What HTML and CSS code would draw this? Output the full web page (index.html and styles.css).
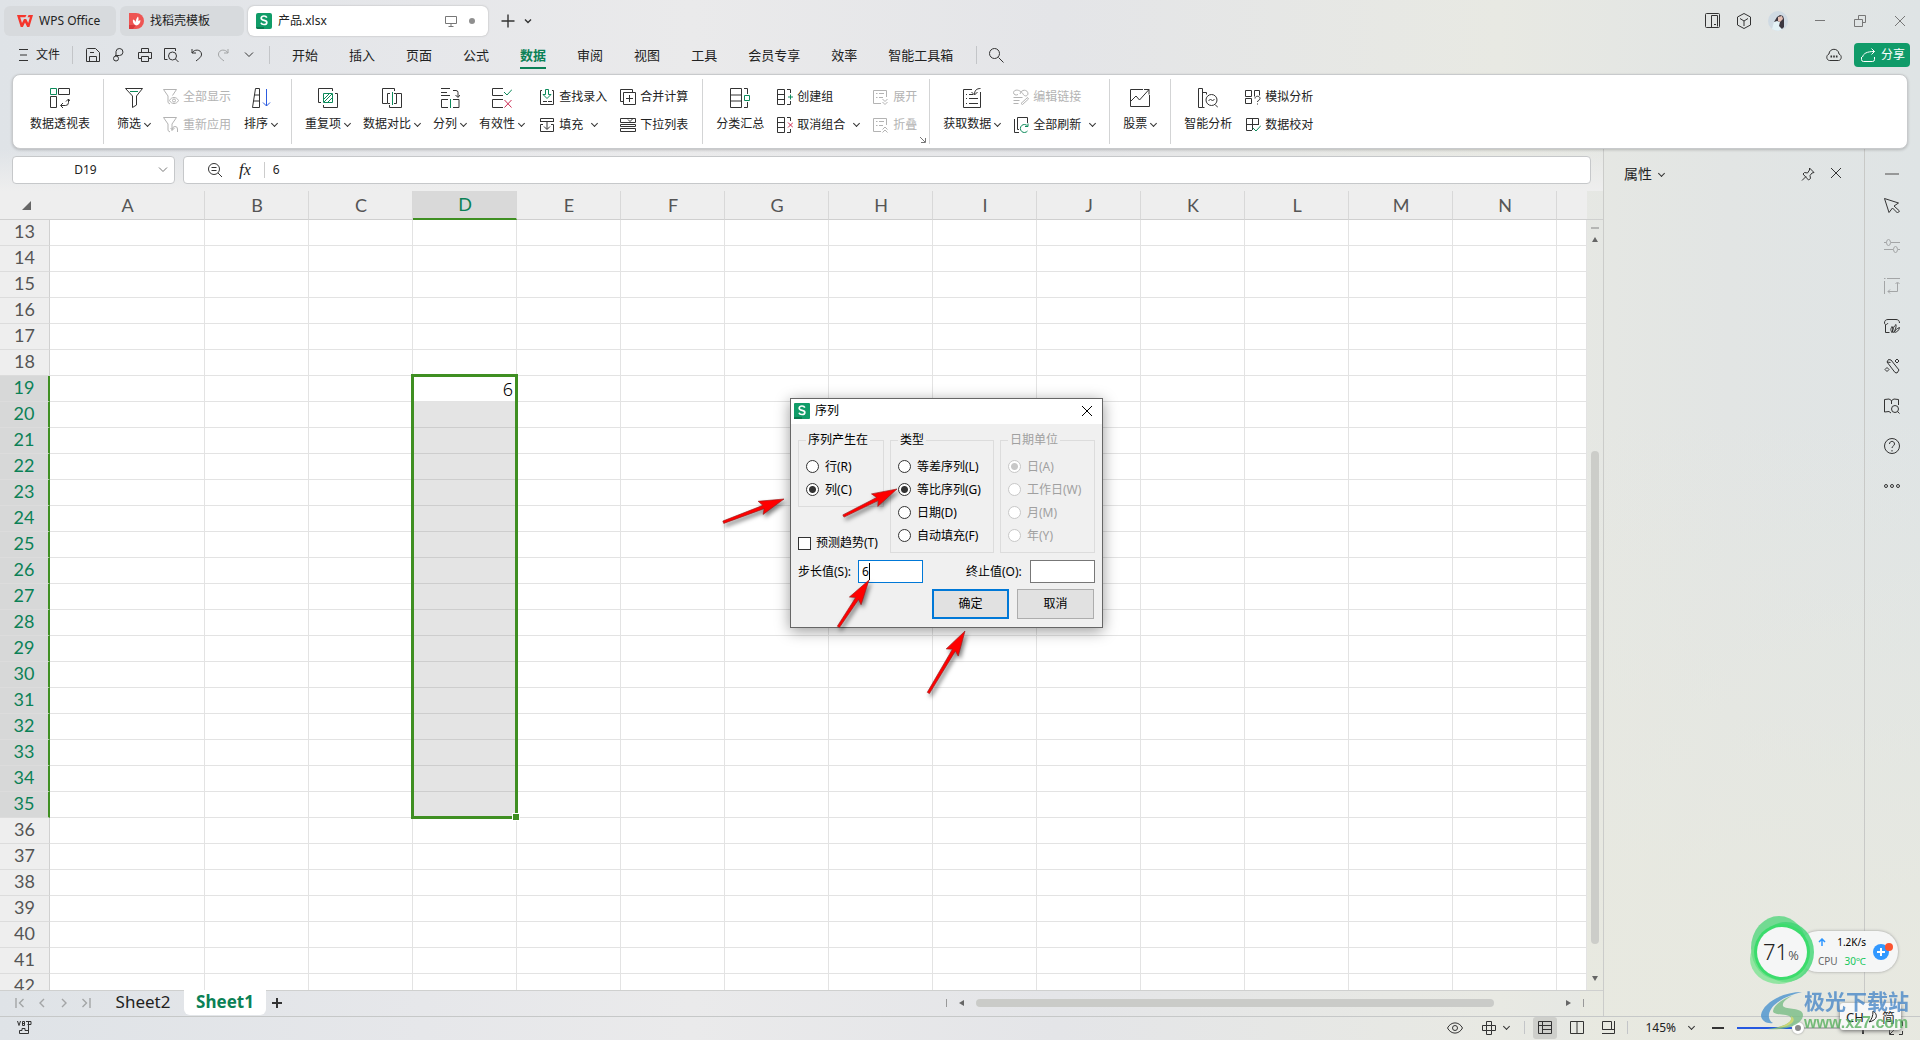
FILE: index.html
```html
<!DOCTYPE html>
<html lang="zh-CN">
<head>
<meta charset="utf-8">
<title>产品.xlsx - WPS Office</title>
<link rel="stylesheet" href="styles.css">
</head>
<body>
<header class="titlebar">
  <button class="doc-tab home">
    <svg width="16" height="14" viewBox="0 0 16 14"><path d="M0 1h9.500l-1.200 2.200H3.200L5 9l2-4h2.200l2 4 1.700-5.800h-2.400L11.600 1H16l-3.600 12h-2.200L8 8.400 5.900 13H3.700z" fill="#f5362d"/></svg>
    <span>WPS Office</span>
  </button>
  <button class="doc-tab docer">
    <svg width="15" height="16" viewBox="0 0 15 16"><path d="M0 0h7a8 8 0 0 1 0 16H0z" fill="#ee5553"/><path d="M0 12h7l-3 4H0z" fill="#d93a3c"/><path d="M7 12.500C4 11 3.500 8.500 4 6.500c1.800.6 2.500 1.700 2.600 3C6.800 7 7.500 5 9 3.500c.8 2 .6 3.200.2 4.600.6-.6 1.400-.9 2.300-.9C11.300 10 10 12 7 12.500z" fill="#fff"/></svg>
    <span>找稻壳模板</span>
  </button>
  <button class="doc-tab active">
    <svg width="16" height="16" viewBox="0 0 16 16"><rect width="16" height="16" rx="2" fill="#109c68"/><path d="M0 14h8v2H2a2 2 0 0 1-2-2z" fill="#0b7a50"/><path d="M10.800 4.700C10.300 3.500 9.300 3 8 3 6.300 3 5.200 3.900 5.200 5.200c0 3 5.600 1.500 5.600 4.200 0 1.300-1.200 2.100-2.800 2.100-1.500 0-2.600-.6-3-1.800" fill="none" stroke="#fff" stroke-width="1.700"/></svg>
    <span class="doc-name">产品.xlsx</span>
    <svg width="12" height="12" viewBox="0 0 12 12" class="ic gray"><path d="M.5 1.500h11v7H.5zM3.500 11.500h5M6 8.500v3"/></svg>
    <i class="unsaved"></i>
  </button>
  <button class="plain" aria-label="新建"><svg width="14" height="14" viewBox="0 0 14 14" class="ic bold"><path d="M7 .5v13M.5 7h13"/></svg></button>
  <button class="plain next" aria-label="标签列表"><svg width="8" height="6" viewBox="0 0 8 6" class="ic bold"><path d="M1 1.500l3 3 3-3"/></svg></button>
  <div class="window-tools">
    <svg width="15" height="15" viewBox="0 0 15 15" class="ic"><rect x=".5" y=".5" width="14" height="14" rx="1"/><path d="M6.500 14V2.500h6v11M9 11.500h2"/></svg>
    <svg width="16" height="16" viewBox="0 0 16 16" class="ic"><path d="M8 .5l6.500 3.500v8L8 15.500 1.500 12V4zM4 5.500l4 2.500 4-2.500M8 8v5"/></svg>
    <svg width="20" height="20" viewBox="0 0 20 20"><circle cx="10" cy="10" r="10" fill="#cfdae3"/><path d="M4 18l2-7 5-3 3 5 1 5a10 10 0 0 1-11 0z" fill="#e3f1f6"/><path d="M6 11l3-5 3-2 3 1 1 3v8l-2 2-3-3 1-4-3-1z" fill="#3b3740"/><path d="M10 6l4-1 1 3-3 3-2-1z" fill="#e4bfb4"/></svg>
    <button class="plain" aria-label="最小化"><svg width="12" height="12" viewBox="0 0 12 12" class="ic gray"><path d="M1 5.500h10"/></svg></button>
    <button class="plain" aria-label="还原"><svg width="12" height="12" viewBox="0 0 12 12" class="ic gray"><path d="M.5 4.500h8v7h-8zM4.500 4.500v-4h7v7h-3"/></svg></button>
    <button class="plain" aria-label="关闭"><svg width="12" height="12" viewBox="0 0 12 12" class="ic gray"><path d="M1 1l10 10M11 1L1 11"/></svg></button>
  </div>
</header>

<nav class="menubar">
  <button class="plain file"><svg width="9" height="12" viewBox="0 0 9 12" class="ic"><path d="M0 .5h9M1 6h7M0 11.500h9"/></svg><span>文件</span></button>
  <i class="sep"></i>
  <div class="quick">
    <svg width="16" height="16" viewBox="0 0 16 16" class="ic"><path d="M1.500 14.500V2.500a1 1 0 0 1 1-1h8l4 4v9zM4.500 14.500v-5h7v5M5 5.500h4"/></svg>
    <svg width="16" height="16" viewBox="0 0 16 16" class="ic"><circle cx="5" cy="11.500" r="2.500"/><path d="M5 8V4.500a3.500 3.500 0 1 1 3.500 4H4"/></svg>
    <svg width="16" height="16" viewBox="0 0 16 16" class="ic"><path d="M4.500 5V1.500h7V5M4 11.500H1.500v-6h13v6H12M4.500 9.500h7v5h-7z"/></svg>
    <svg width="16" height="16" viewBox="0 0 16 16" class="ic"><path d="M4.500 12.500h-3v-11h11V4"/><circle cx="9.500" cy="9" r="4"/><path d="M12.500 12l3 3"/></svg>
    <svg width="16" height="16" viewBox="0 0 16 16" class="ic"><path d="M3 2v4h4M3 6c2-4 9-4 9.500 1C12.700 10 10 11.500 7 14"/></svg>
    <svg width="16" height="16" viewBox="0 0 16 16" class="ic pale"><path d="M13 2v4H9M13 6C11 2 4 2 3.500 7 3.300 10 6 11.500 9 14"/></svg>
    <svg width="10" height="6" viewBox="0 0 10 6" class="ic more"><path d="M1 .5l4 4 4-4"/></svg>
  </div>
  <i class="sep"></i>
  <div class="menu-tabs">
    <button>开始</button><button>插入</button><button>页面</button><button>公式</button><button class="on">数据</button><button>审阅</button><button>视图</button><button>工具</button><button>会员专享</button><button>效率</button><button>智能工具箱</button>
  </div>
  <i class="sep"></i>
  <button class="plain search" aria-label="搜索"><svg width="16" height="16" viewBox="0 0 16 16" class="ic"><circle cx="6.500" cy="6.500" r="5"/><path d="M10.500 10.500l5 5"/></svg></button>
  <div class="share-tools">
    <svg width="16" height="14" viewBox="0 0 16 14" class="ic"><path d="M3.500 12.500C.3 12.300-.3 7.300 3 6c.2-6 9.500-6.500 10 0 3.300 1.200 2.700 6.300-.5 6.500z"/><path d="M4.500 8.500h1.600M7.200 8.500h1.600M9.900 8.500h1.600" stroke-width="2"/></svg>
    <button class="share"><svg width="15" height="14" viewBox="0 0 15 14"><path d="M.5 9v2.500a2 2 0 0 0 2 2h9a2 2 0 0 0 2-2V9M1.500 9c1-3.500 4-5.500 12-5.500M10.500.5l3 3-3 3" fill="none" stroke="#fff"/></svg><span>分享</span></button>
  </div>
</nav>

<section class="ribbon" aria-label="数据">
  <div class="group">
    <button class="big"><svg width="20" height="20" viewBox="0 0 20 20" class="ic"><path class="g" d="M.5.500h6v6h-6z"/><path d="M8.500.5h11v6h-11zM.5 8.500h6v11h-6zM11 17.500h4.500a3 3 0 0 0 3-3V11M13 15l-2.500 2.500L13 20M16 13.500l2.500-2.500 1.500 2"/></svg><span>数据透视表</span></button>
  </div>
  <div class="group">
    <button class="big"><svg width="20" height="20" viewBox="0 0 20 20" class="ic"><path d="M1.500.5h17l-6 7.500v9l-4 2.500V8z"/><path class="g" d="M6 3.500h8"/></svg><span class="drop">筛选</span></button>
    <div class="stack">
      <button disabled><svg width="16" height="16" viewBox="0 0 16 16" class="ic"><path d="M7 15l-2-1.500V7L.5.500h13L9.500 6.500M6.500 11.500c2-4 7-4 9 0-2 4-7 4-9 0z"/><circle cx="11" cy="11.500" r="1.500"/></svg>全部显示</button>
      <button disabled><svg width="16" height="16" viewBox="0 0 16 16" class="ic"><path d="M7 15l-2-1.500V7L.5.500h13L9 7v7M14.500 15v-3a2.500 2.500 0 0 0-5 0M7.500 11l2 2 2-2"/></svg>重新应用</button>
    </div>
    <button class="big"><svg width="20" height="20" viewBox="0 0 20 20" class="ic"><path d="M4.500.5h4v19h-7zM3.500 7h5M2.500 13h6"/><path class="b" d="M15.500 1v17M12 14.500l3.500 3.500 3.500-3.500"/></svg><span class="drop">排序</span></button>
  </div>
  <div class="group">
    <button class="big"><svg width="20" height="20" viewBox="0 0 20 20" class="ic"><path d="M3 14.500H.5V.5h14V3M17 5.500h2.500v14h-14V17"/><path class="g" d="M5.500 5.500h9v9h-9zM6 11l5-5M6 14l8-8M10 14l4-4"/></svg><span class="drop">重复项</span></button>
    <button class="big"><svg width="20" height="20" viewBox="0 0 20 20" class="ic"><path d="M5 15.500H.5V.5h12V3M15 5.500h4.500v14h-12V17M8 5.500H5.500v10H8M12 5.500h2.500v10H12"/><path class="g" d="M10.500 4v13"/></svg><span class="drop">数据对比</span></button>
    <button class="big"><svg width="20" height="20" viewBox="0 0 20 20" class="ic"><path d="M1 .5h9M1 4.500h6M1 7.500h9M13 2.500h3a2 2 0 0 1 2 2V9M15.500 7L18 9.500 20 7M8 19.500H1.500v-8H8M13 11.500h6v8h-6"/><path class="g" d="M10.500 11v9"/></svg><span class="drop">分列</span></button>
    <button class="big"><svg width="20" height="20" viewBox="0 0 20 20" class="ic"><path d="M11 .5H.5v7H11M11 11.500H.5v8H11"/><path class="g" d="M12 4l3 3 5-5.500"/><path class="r" d="M12.500 12l7 7.500M19.500 12l-7 7.500"/></svg><span class="drop">有效性</span></button>
    <div class="stack apart">
      <button><svg width="16" height="16" viewBox="0 0 16 16" class="ic"><path d="M3 1.500H1.500v14h13v-14H13M4 12.500h4M9 12.500h4"/><path class="g" d="M6.500.5h3v5h2.500L8 9.500 4 5.500h2.500z"/></svg>查找录入</button>
      <button class="drop"><svg width="16" height="16" viewBox="0 0 16 16" class="ic"><path d="M1.500 5V1.500h13V5M1 4.500h14M4 7.500H1.500v7h13v-7H12M8 5v7M5 9.500l3 3 3-3"/></svg>填充</button>
    </div>
    <div class="stack">
      <button><svg width="16" height="16" viewBox="0 0 16 16" class="ic"><path d="M3 12.500H.5V.5h12V3M3.500 3.500h12v12h-12zM9.500 6v7M6 9.500h7"/></svg>合并计算</button>
      <button><svg width="16" height="16" viewBox="0 0 16 16" class="ic"><path d="M.5 1.500h15v4H.5zM.5 7.500h15v2H.5zM.5 11.500h15v3H.5zM8 2.500l2 2 3-3"/></svg>下拉列表</button>
    </div>
  </div>
  <div class="group">
    <button class="big"><svg width="20" height="20" viewBox="0 0 20 20" class="ic"><path d="M.5.500h11v19H.500zM.5 7h11M.5 13h11M14 .5h3.500V6M17.500 14v5.500H14"/><path class="g" d="M14.500 7.500h5v5h-5z"/></svg><span>分类汇总</span></button>
    <div class="stack">
      <button><svg width="16" height="16" viewBox="0 0 16 16" class="ic"><path d="M.5.500h7v15H.500zM.5 5.500h7M.5 10.500h7M10 .5h3.500V4M13.500 12v3.500H10"/><path class="g" d="M13.500 5.500v5M11 8h5"/></svg>创建组</button>
      <button class="drop"><svg width="16" height="16" viewBox="0 0 16 16" class="ic"><path d="M.5.500h7v15H.500zM.5 5.500h7M.5 10.500h7M10 .5h3.500V4M13.500 12v3.500H10"/><path class="r" d="M11 5.500l5 5M16 5.500l-5 5"/></svg>取消组合</button>
    </div>
    <div class="stack">
      <button disabled><svg width="16" height="16" viewBox="0 0 16 16" class="ic"><path d="M8 14.500H.5V1.500h13V8M3 4.500h1.500M6 4.500h5M3 8.500h1.500M6 8.500h4M9.500 10l2.500 2.500 2.500-2.500M9.500 13l2.500 2.500 2.500-2.500"/></svg>展开</button>
      <button disabled><svg width="16" height="16" viewBox="0 0 16 16" class="ic"><path d="M8 14.500H.5V1.500h13V8M3 4.500h1.500M6 4.500h5M3 8.500h1.500M6 8.500h4M9.500 12.500L12 10l2.500 2.500M9.500 15.500L12 13l2.500 2.500"/></svg>折叠</button>
    </div>
    <svg class="ic gray launcher" width="6" height="6" viewBox="0 0 6 6"><path d="M0 0l5 5M5.500 1v4.500H1"/></svg>
  </div>
  <div class="group">
    <button class="big"><svg width="20" height="20" viewBox="0 0 20 20" class="ic"><path d="M10 1.500H1.500v18h17V4M4 6.500h1M7 6.500h4M4 10.500h1M7 10.500h9M4 15.500h1M7 15.500h9M18.500.5c-4 0-6 2-6 6M9.500 4l3 3 3-3"/></svg><span class="drop">获取数据</span></button>
    <div class="stack">
      <button disabled><svg width="16" height="16" viewBox="0 0 16 16" class="ic"><path d="M7 5c1-5 8-5 8 0-1 3-4 2-5 0S5 0 2 1.500s-1 6 3 4M.5 8.500h9M.5 11.500h6M.5 14.500h5M8 14.500l6.500-6 1 1.500-6 5.500z"/></svg>编辑链接</button>
      <button class="drop"><svg width="16" height="16" viewBox="0 0 16 16" class="ic"><path d="M1.500 2v13.500H6M6 12.500H4.500V.5h10V6"/><path class="g" d="M14.500 9a4 4 0 1 0 0 5M15 6.500v3h-3"/></svg>全部刷新</button>
    </div>
  </div>
  <div class="group">
    <button class="big"><svg width="20" height="20" viewBox="0 0 20 20" class="ic"><path d="M13 1.500H.5v17h19V7M1 13l5-5 3.500 4L19 1.500M14 1.500h5v5"/></svg><span class="drop">股票</span></button>
  </div>
  <div class="group last">
    <button class="big"><svg width="20" height="20" viewBox="0 0 20 20" class="ic"><path d="M.5.500h4v19h-4zM4.500 4.500h4v2M6.500 19.500h-2M17 16.500l3 3"/><circle cx="13.500" cy="12" r="5.500"/><path d="M10.500 13l2-2 2 2 2-2"/></svg><span>智能分析</span></button>
    <div class="stack">
      <button><svg width="16" height="16" viewBox="0 0 16 16" class="ic"><path d="M.5 1.500h6v6h-6zM9.500 7.500v-6h5v5M.5 9.500h6v5h-6zM10 9.500c0-3 5-3 5 0 0 2-2.500 1.500-2.500 3.500M12.500 14.500v1"/></svg>模拟分析</button>
      <button><svg width="16" height="16" viewBox="0 0 16 16" class="ic"><path d="M7 13.500H1.500v-12h12V8M1.500 7.500h12M7.500 1.500V13"/><path class="g" d="M8 11l3 3 5-5.500"/></svg>数据校对</button>
    </div>
  </div>
</section>

<div class="workspace">
  <main class="sheet">
    <div class="formula-row">
      <label class="name-box"><input value="D19" aria-label="名称框"><svg width="10" height="6" viewBox="0 0 10 6" class="ic gray"><path d="M1 .5l4 4 4-4"/></svg></label>
      <label class="formula-box">
        <svg width="16" height="16" viewBox="0 0 16 16" class="ic"><circle cx="7" cy="7" r="5.500"/><path d="M11 11l4 4M4.500 5.500h5M4.500 8.500h5"/></svg>
        <span class="fx">f<small>x</small></span>
        <i></i>
        <input value="6" aria-label="编辑栏">
      </label>
    </div>
    <div class="grid-row">
      <div class="grid">
        <table><colgroup id="cols"></colgroup><thead><tr id="head"></tr></thead><tbody id="body"></tbody></table>
        <div class="selection"></div>
      </div>
      <div class="vscroll">
        <i class="split"></i><i class="arrow up"></i><div class="vtrack"><i class="vthumb"></i></div><i class="arrow down"></i>
      </div>
    </div>
    <div class="sheet-bar">
      <div class="sheet-nav">
        <svg width="10" height="10" viewBox="0 0 10 10" class="ic pale bold"><path d="M1 0v10M8.500 1l-4 4 4 4"/></svg>
        <svg width="10" height="10" viewBox="0 0 10 10" class="ic pale bold"><path d="M7 1L3 5l4 4"/></svg>
        <svg width="10" height="10" viewBox="0 0 10 10" class="ic pale bold"><path d="M3 1l4 4-4 4"/></svg>
        <svg width="10" height="10" viewBox="0 0 10 10" class="ic pale bold"><path d="M9 0v10M1.500 1l4 4-4 4"/></svg>
      </div>
      <button class="sheet-tab">Sheet2</button>
      <button class="sheet-tab on">Sheet1</button>
      <button class="plain add" aria-label="新建工作表"><svg width="10" height="10" viewBox="0 0 10 10" class="ic heavy"><path d="M5 0v10M0 5h10"/></svg></button>
      <div class="hscroll"><i class="split"></i><i class="arrow left"></i><div class="htrack"><i class="hthumb"></i></div><i class="arrow right"></i><i class="split"></i></div>
    </div>
  </main>
  <aside class="props">
    <h2 class="drop">属性</h2>
    <svg width="14" height="14" viewBox="0 0 14 14" class="ic"><path d="M8.500 1l4.500 4.500-2 .5-2 2.500.5 3L7.500 13 2 7l1.500-1.500 3 .5L8.500 3zM5 9.500L1 13.500"/></svg>
    <svg width="12" height="12" viewBox="0 0 12 12" class="ic"><path d="M1 1l10 10M11 1L1 11"/></svg>
  </aside>
  <aside class="rail">
    <svg width="16" height="16" viewBox="0 0 16 16" class="ic gray bold"><path d="M1 8h14"/></svg>
    <svg width="16" height="16" viewBox="0 0 16 16" class="ic"><path d="M.5.500l14 4.500L10 8l5.500 5-2 2L8.500 10 5 14.500z"/></svg>
    <svg width="16" height="16" viewBox="0 0 16 16" class="ic pale"><path d="M0 4.500h2.500M7 4.500h9M0 11.500h9M14 11.500h2"/><ellipse cx="4.500" cy="4.500" rx="2" ry="3"/><ellipse cx="11.500" cy="11.500" rx="2" ry="3"/></svg>
    <svg width="16" height="16" viewBox="0 0 16 16" class="ic pale"><path d="M0 .5h1.500M3 .5h13M.5 3v13M4 13.500h9.500V5M6 11.500l-2 2 2 2M11.500 6l2-2 2 2"/></svg>
    <svg width="16" height="16" viewBox="0 0 16 16" class="ic"><path d="M15.500 5C15.500 2.500 14 1.500 12 1.500H4C1.500 1.500.5 3 .5 5s2.500 2 3.500 0M1.500 7v7.500h4"/><path d="M8 14.500c-2-3-1-4 0-6 1.500 2 1 4 0 6 1-4 1.500-6 4-8 .5 3-1 6-2.500 8 2-2.500 3.500-4 6-5-.5 3-2.500 4.500-5 5"/></svg>
    <svg width="16" height="16" viewBox="0 0 16 16" class="ic"><path d="M3 4l1.500-2.500 2.500.5 8 10-2 3-2-.5zM3 4l3.500.5M13 1l2 2-2 2-2-2zM3 9.500l2 2-2 2-2-2z"/></svg>
    <svg width="16" height="16" viewBox="0 0 16 16" class="ic"><path d="M7 15l-2-1.500-4.500.5V1.500L5 1l2.500 1.500V6M7.500 2.500L10 1l4.500.5V7"/><circle cx="11" cy="11" r="3.500"/><path d="M13.500 13.500l2 2"/></svg>
    <svg width="16" height="16" viewBox="0 0 16 16" class="ic"><circle cx="8" cy="8" r="7.500"/><path d="M5.500 6c0-3.500 5-3.500 5 0C10.500 8 8 8 8 10M8 12v1.500"/></svg>
    <svg width="16" height="16" viewBox="0 0 16 16" class="ic"><circle cx="2" cy="8" r="1.500"/><circle cx="8" cy="8" r="1.500"/><circle cx="14" cy="8" r="1.500"/></svg>
  </aside>
</div>

<footer class="status">
  <svg width="15" height="14" viewBox="0 0 15 14" class="ic"><path d="M.5 0L2 4.500 3.500 0M5.500.5v4h2v-4zM5.500 2.500h2M9 .5h5v3h-3.500M11.500 1v11.500H2.500v-3H5V7.500h3v2h3"/></svg>
  <div class="status-tools">
    <svg width="16" height="12" viewBox="0 0 16 12" class="ic"><path d="M.5 6C4-.8 12-.8 15.500 6 12 12.800 4 12.800.5 6z"/><circle cx="8" cy="6" r="2.500"/></svg>
    <span class="drop"><svg width="14" height="14" viewBox="0 0 14 14" class="ic"><path d="M4.500 4.500v-4h5v4h4v5h-4v4h-5v-4h-4v-5zM4.500 4.500h5v5h-5z"/></svg></span>
    <i class="sep"></i>
    <button class="view on" aria-label="普通视图"><svg width="14" height="13" viewBox="0 0 14 13" class="ic"><path d="M.5.500h13v12H.500zM.5 4.500h13M4.500.5v12M4.500 8.500h9"/></svg></button>
    <button class="view" aria-label="分页预览"><svg width="14" height="13" viewBox="0 0 14 13" class="ic"><path d="M.5.500h13v12H.500zM7 .5v12"/></svg></button>
    <button class="view" aria-label="阅读模式"><svg width="14" height="13" viewBox="0 0 14 13" class="ic"><path d="M.5.500h9v8h-9zM12.500 0v12.500H0M9.500 8.500h-9M12.500 8.500h-3"/></svg></button>
    <i class="sep"></i>
    <span class="drop zoom">145%</span>
    <svg width="12" height="12" viewBox="0 0 12 12" class="ic heavy"><path d="M0 6h12"/></svg>
    <input type="range" min="0" max="100" value="52" aria-label="缩放">
    <svg width="12" height="12" viewBox="0 0 12 12" class="ic heavy"><path d="M0 6h12M6 0v12"/></svg>
    <svg width="14" height="14" viewBox="0 0 14 14" class="ic"><path d="M9 .5h4.500V5M5 13.500H.5V9M13 1L8.500 5.500M1 13l4.500-4.500M.5 4V.5H4M10 13.500h3.500V10"/></svg>
  </div>
</footer>

<form class="dialog" role="dialog" aria-label="序列">
  <div class="dialog-title">
    <svg width="16" height="16" viewBox="0 0 16 16"><rect width="16" height="16" rx="1" fill="#109c68"/><path d="M0 14h8v2H0z" fill="#0b7a50"/><path d="M10.800 4.700C10.300 3.500 9.300 3 8 3 6.300 3 5.200 3.900 5.200 5.200c0 3 5.600 1.500 5.600 4.200 0 1.300-1.200 2.100-2.800 2.100-1.500 0-2.600-.6-3-1.800" fill="none" stroke="#fff" stroke-width="1.700"/></svg>
    <span>序列</span>
    <button type="button" class="plain" aria-label="关闭"><svg width="12" height="12" viewBox="0 0 12 12" class="ic dark"><path d="M1 1l10 10M11 1L1 11"/></svg></button>
  </div>
  <div class="dialog-body">
    <div class="sets">
      <div class="left-set">
        <fieldset><legend>序列产生在</legend>
          <label><input type="radio" name="dir">行(R)</label>
          <label><input type="radio" name="dir" checked>列(C)</label>
        </fieldset>
        <label class="trend"><input type="checkbox">预测趋势(T)</label>
      </div>
      <fieldset class="mid"><legend>类型</legend>
        <label><input type="radio" name="kind">等差序列(L)</label>
        <label><input type="radio" name="kind" checked>等比序列(G)</label>
        <label><input type="radio" name="kind">日期(D)</label>
        <label><input type="radio" name="kind">自动填充(F)</label>
      </fieldset>
      <fieldset class="unit" disabled><legend>日期单位</legend>
        <label><input type="radio" name="unit" checked>日(A)</label>
        <label><input type="radio" name="unit">工作日(W)</label>
        <label><input type="radio" name="unit">月(M)</label>
        <label><input type="radio" name="unit">年(Y)</label>
      </fieldset>
    </div>
    <div class="values">
      <label for="step">步长值(S):</label><span class="step-field"><input id="step" value="6"><i class="caret"></i></span>
      <label for="stop" class="stop">终止值(O):</label><input id="stop">
    </div>
    <div class="actions"><button type="button" class="ok">确定</button><button type="button">取消</button></div>
  </div>
</form>

<svg class="arrows" width="280" height="230" viewBox="710 480 280 230">
  <g fill="#f00" stroke="#9b1c1c" stroke-width=".6">
    <path transform="translate(784 499) rotate(-20.700)" d="M0 0L-25-7-22-1.500-65-1v2.500L-22 2-25 7z"/>
    <path transform="translate(897 489) rotate(-26.500)" d="M0 0L-25-7-22-1.500-60-1v2.500L-22 2-25 7z"/>
    <path transform="translate(869 580) rotate(-56.600)" d="M0 0L-25-7-22-1.500-56-1v2.500L-22 2-25 7z"/>
    <path transform="translate(965 631) rotate(-59.200)" d="M0 0L-25-7-22-1.500-72-1v2.500L-22 2-25 7z"/>
  </g>
</svg>

<div class="monitor">
  <svg class="ball" width="66" height="70" viewBox="0 0 66 70"><ellipse cx="30" cy="32" rx="28" ry="32" fill="#55d67e" opacity=".8"/><ellipse cx="37" cy="36" rx="28" ry="30" fill="#3fd673" opacity=".8"/><ellipse cx="30" cy="43" rx="29" ry="25" fill="#6ee287" opacity=".7"/><circle cx="33" cy="36" r="28" fill="#3bdc6c"/><circle cx="33" cy="36" r="25" fill="#f5f6f6"/></svg>
  <span class="load">71<small>%</small></span>
  <div class="pill">
    <div class="rates"><span><svg width="8" height="8" viewBox="0 0 8 8"><path d="M4 8V1M1 4l3-3 3 3" fill="none" stroke="#2e96ff" stroke-width="1.500"/></svg><b>1.2K/s</b></span><span>CPU <em>30℃</em></span></div>
    <svg width="22" height="18" viewBox="0 0 22 18"><circle cx="9" cy="10" r="8" fill="#3198ff"/><path d="M9 6v8M5 10h8" stroke="#fff" stroke-width="2"/><circle cx="17" cy="5" r="4" fill="#fb5430"/></svg>
  </div>
</div>

<div class="ime"><span>CH</span><svg width="10" height="14" viewBox="0 0 10 14"><path d="M5 1c5 3 5 9-4 11 3-3 4-6 4-11z" fill="none" stroke="#222"/></svg><span>简</span></div>
<div class="watermark">
  <svg width="44" height="40" viewBox="0 0 44 40"><path d="M42 1C22 1 3 12 1 24c0 6 6 9 12 8C6 28 8 18 18 11c7-5 15-8 24-10z" fill="#4a93cf"/><path d="M34 4C22 8 14 14 13 20c0 5 16 2 18 7 1 5-9 9-24 11 20 2 36-5 36-14 0-8-17-5-20-9-1-4 4-8 11-11z" fill="#79bd85"/><path d="M13 38c12-3 20-7 18-13 6 3 3 11-18 13z" fill="#c6d35b"/></svg>
  <div><strong>极光下载站</strong><span>www.xz7.com</span></div>
</div>
<script src="grid.js"></script>
</body>
</html>
```
FILE: styles.css
```css
* { box-sizing: border-box; }
html { height: 100%; overflow: hidden; }
body {
  margin: 0; height: 100%; display: flex; flex-direction: column; overflow: hidden; position: relative;
  font: 12px/16px "Noto Sans", "Noto Sans CJK SC", sans-serif; color: #222;
  background:
    linear-gradient(180deg, transparent 0 40%, rgba(232,233,224,.9) 92%) right / 340px 100% no-repeat,
    linear-gradient(90deg, #dfe3e7 0, #e6e7ea 22%, #eaeaeb 36%, #e4e5e8 55%, #e8e9e3 78%, #e2e5e4 90%, #dfe4e5 100%);
}
button, input { font: inherit; color: inherit; margin: 0; padding: 0; }
button { border: 0; background: none; white-space: nowrap; }
svg { display: block; flex: none; }
i { display: block; flex: none; font-style: normal; }
.ic { fill: none; stroke: #333; stroke-width: 1; }
.ic.gray { stroke: #777; }
.ic.pale { stroke: #a3a5a6; }
.ic.dark { stroke: #000; }
.ic.bold { stroke-width: 1.400; }
.ic.heavy { stroke-width: 2; }
.ic .g { stroke: #0c8a5a; }
.ic .b { stroke: #2c5ce0; }
.ic .r { stroke: #cc2b53; }
.plain { display: flex; align-items: center; }
.drop::after {
  content: ""; width: 4px; height: 4px; margin: 0 1px 3px 5px; flex: none; display: inline-block;
  border: solid #333; border-width: 0 1px 1px 0; transform: rotate(45deg); vertical-align: middle;
}

/* window title and document tabs */
.titlebar { display: flex; align-items: center; height: 40px; padding: 1px 14px 0 4px; flex: none; }
.doc-tab { display: flex; align-items: center; gap: 6px; height: 30px; border-radius: 6px; background: #d7dadd; }
.home { width: 112px; padding-left: 13px; margin-right: 4px; }
.docer { width: 124px; padding-left: 9px; margin-right: 4px; }
.doc-tab.active { width: 240px; padding: 0 13px 0 8px; background: #fff; box-shadow: 0 0 2px #aaa; margin-right: 13px; }
.doc-name { flex: 1; text-align: left; }
.unsaved { width: 6px; height: 6px; border-radius: 50%; background: #8f8f8f; margin-left: 6px; }
.next { margin-left: 9px; }
.window-tools { margin-left: auto; display: flex; align-items: center; gap: 16px; }
.window-tools .plain { margin-left: 10px; }
.window-tools .plain + .plain { margin-left: 12px; }

.menubar { display: flex; align-items: center; height: 34px; padding: 0 10px 4px 19px; flex: none; }
.file { gap: 8px; margin-right: 12px; }
.sep { width: 1px; height: 18px; background: #c3c5c8; }
.quick { display: flex; align-items: center; gap: 10px; padding: 0 15px 0 12px; }
.quick .more { margin-left: 3px; }
.menu-tabs { display: flex; gap: 31px; padding: 0 23px 0 22px; font-size: 13px; line-height: 20px; }
.menu-tabs button { padding-top: 2px; height: 27px; border-bottom: 2px solid transparent; }
.menu-tabs .on { color: #0b8156; font-weight: 700; border-color: #0b8156; }
.search { margin-left: 11px; }
.share-tools { margin-left: auto; display: flex; align-items: center; gap: 12px; }
.share { display: flex; align-items: center; gap: 5px; width: 56px; height: 24px; padding-left: 7px; border-radius: 4px; background: #109b69; color: #fff; }

.ribbon { display: flex; height: 75px; margin: 0 12px; flex: none; border: 1px solid #c8cacc; border-radius: 8px; background: #fff; box-shadow: 0 1px 3px rgba(0,0,0,.2); position: relative; z-index: 1; }
.group { display: flex; gap: 13px; padding: 0 14px 0 13px; margin: 4px 0; border-right: 1px solid #d3d4d5; position: relative; align-items: flex-start; }
.group:first-child { padding-left: 17px; padding-right: 13px; }
.group:nth-child(4) { padding-right: 12px; }
.group:nth-child(5) { padding-right: 13px; }
.group.last { border: 0; }
.big { display: flex; flex-direction: column; align-items: center; gap: 8px; padding-top: 9px; }
.big .drop { margin-right: -1px; }
.big .drop::after { margin-left: 4px; }
.stack { display: flex; flex-direction: column; gap: 12px; padding-top: 10px; }
.stack.apart { margin-left: 2px; }
.stack button { display: flex; align-items: center; gap: 4px; height: 16px; }
.stack button:disabled { color: #b3b3b3; }
.stack button:disabled .ic { stroke: #b3b3b3; }
.launcher { position: absolute; right: 3px; bottom: 1px; }

.workspace { flex: 1; display: flex; min-height: 0; }
.sheet { flex: 1; display: flex; flex-direction: column; min-width: 0; }
.formula-row { display: flex; gap: 8px; height: 42px; padding: 7px 12px 7px 12px; flex: none; background: linear-gradient(180deg, transparent, #eee); }
.name-box, .formula-box { display: flex; align-items: center; border: 1px solid #c6c8ca; border-radius: 4px; background: #fff; }
.name-box { width: 163px; padding-right: 6px; }
.name-box input, .formula-box input { border: 0; background: none; min-width: 0; flex: 1; outline: 0; }
.name-box input { text-align: center; padding-right: 12px; width: 100px; padding-left: 12px; }
.formula-box { flex: 1; padding-left: 23px; }
.fx { font: italic 17px/20px "Liberation Serif", serif; margin: 0 13px 0 16px; }
.fx small { font-size: 16px; }
.formula-box i { width: 1px; height: 16px; background: #ccc; margin-right: 8px; }

/* cells */
.grid-row { flex: 1; display: flex; min-height: 0; border-bottom: 1px solid #cfd0cf; }
.grid { flex: 1; overflow: hidden; position: relative; background: #fff; min-width: 0; }
table { width: 100%; table-layout: fixed; border-spacing: 0; border-collapse: separate; }
th { padding: 0; background: #eee; color: #555; font: 400 18px/23px Lato, sans-serif; text-align: center; }
thead th { height: 29px; border-right: 1px solid #d8d8d8; border-bottom: 1px solid #cfcfcf; padding-left: 1px; }
thead th:first-child { border-right: 0; }
thead th:last-child { border-right: 0; }
thead th.on { background: #d9d9d9; color: #0b8156; border-bottom: 2px solid #3f8f22; }
.corner { display: block; width: 0; height: 0; margin-left: 21px; border-left: 9px solid transparent; border-bottom: 9px solid #666; }
tbody th { height: 26px; border-right: 1px solid #d0d0d0; border-bottom: 1px solid #dcdcdc; padding-bottom: 2px; }
tbody th.on { background: #d7d8d8; color: #0b8156; border-right: 2px solid #3f8f22; }
td { padding: 2px 3px 0 0; border-right: 1px solid #e3e3e3; border-bottom: 1px solid #e3e3e3; height: 26px; font-size: 18px; line-height: 23px; font-weight: 300; text-align: right; color: #000; }
td.fill { background: #e4e4e4; border-color: #cdcdcd; }
.selection { position: absolute; left: 411px; top: 183px; width: 107px; height: 445px; border: 3px solid #3f8f22; }
.selection::after { content: ""; position: absolute; right: -5px; bottom: -5px; width: 6px; height: 6px; background: #3f8f22; border: 1px solid #fff; }
.vscroll { width: 16px; flex: none; display: flex; flex-direction: column; align-items: center; margin-top: 28px; padding: 7px 0 9px; border-top: 1px solid #cfd0cf; gap: 8px; }
.vscroll .split { width: 8px; height: 2px; background: #b5b6b4; }
.vtrack { flex: 1; display: flex; flex-direction: column; width: 8px; }
.vthumb { width: 8px; height: 493px; margin-top: auto; margin-bottom: 24px; border-radius: 4px; background: #cccdc9; }
.arrow { width: 0; height: 0; border: 3px solid transparent; }
.up { border-bottom: 5px solid #666; border-top: 0; }
.down { border-top: 5px solid #666; border-bottom: 0; }
.left { border-right: 5px solid #666; border-left: 0; }
.right { border-left: 5px solid #666; border-right: 0; }

.sheet-bar { display: flex; align-items: center; height: 25px; flex: none; padding: 0 0 2px 15px; }
.sheet-nav { display: flex; gap: 12px; width: 89px; }
.sheet-tab { width: 78px; height: 24px; font-size: 17px; line-height: 20px; padding-bottom: 2px; align-self: flex-start; }
.sheet-tab.on { width: 82px; margin-top: -1px; height: 25px; background: #fff; color: #0b8156; font-weight: 700; border-radius: 0 0 6px 6px; margin-left: 2px; }
.add { margin-left: 6px; }
.hscroll { display: flex; align-items: center; width: 638px; margin-left: auto; margin-right: 19px; gap: 12px; }
.hscroll .split { width: 1px; height: 8px; background: #999; }
.htrack { flex: 1; }
.hthumb { width: 518px; height: 8px; border-radius: 4px; background: #cacbc8; }

.props { width: 262px; flex: none; border-left: 1px solid #cbccca; border-right: 1px solid #c8c9c7; display: flex; align-items: flex-start; padding: 18px 22px 0 20px; gap: 15px; }
.props h2 { margin: -2px auto 0 0; font-size: 14px; line-height: 18px; font-weight: 400; }
.props h2::after { margin-left: 7px; }
.rail { width: 55px; flex: none; display: flex; flex-direction: column; align-items: center; gap: 24px; padding: 17px 2px 0 0; }
.rail svg:first-child { margin-bottom: -8px; }

.status { height: 24px; flex: none; border-top: 1px solid #c6c8c8; display: flex; align-items: center; padding: 0 17px 2px; }
.status-tools { margin-left: auto; display: flex; align-items: center; }
.status-tools > svg:first-child { margin-right: 19px; }
.status-tools .drop { display: flex; align-items: center; }
.status-tools .drop::after { margin-left: 8px; }
.status-tools .sep { height: 13px; margin: 0 8px 0 14px; }
.view { width: 24px; height: 22px; display: flex; align-items: center; justify-content: center; border-radius: 3px; }
.view.on { background: #cecfcb; }
.view + .view { margin-left: 8px; }
.status-tools .view + .sep { margin-left: 6px; margin-right: 17px; }
.status-tools .zoom { margin-right: 17px; }
.status-tools .zoom::after { margin-left: 13px; }
input[type=range] { appearance: none; width: 118px; height: 12px; margin: 0 2px 0 13px; background: linear-gradient(90deg, #2558e0 50%, #b4b6b3 50%) center / 100% 2px no-repeat; }
input[type=range] + svg { margin-right: 20px; }
input[type=range]::-webkit-slider-thumb { appearance: none; width: 12px; height: 12px; border-radius: 50%; border: 3px solid #fff; background: #888; box-shadow: 0 0 2px #888; }

/* series dialog */
.dialog { position: absolute; z-index: 3; left: 790px; top: 398px; width: 313px; border: 1px solid #666; background: #f0f0f0; box-shadow: 0 3px 14px rgba(0,0,0,.4); color: #000; }
.dialog-title { display: flex; align-items: center; gap: 5px; height: 25px; padding: 0 9px 1px 3px; background: #fff; }
.dialog-title .plain { margin-left: auto; }
.dialog-body { padding: 8px 7px 8px; }
.sets { display: flex; gap: 6px; }
fieldset { margin: 0; padding: 7px 0 0 7px; min-width: 0; border: 1px solid #dcdcdc; height: 121px; }
legend { padding: 0 2px; line-height: 16px; }
fieldset label { display: flex; align-items: center; gap: 6px; height: 23px; white-space: nowrap; }
.left-set { width: 86px; }
.left-set fieldset { height: 75px; }
.mid { width: 104px; }
.unit { width: 95px; color: #a0a0a0; }
.trend { display: flex; align-items: center; gap: 5px; margin-top: 28px; height: 16px; white-space: nowrap; }
.dialog input[type=radio], .dialog input[type=checkbox] { appearance: none; flex: none; width: 13px; height: 13px; border: 1px solid #333; background: #fff; }
.dialog input[type=radio] { border-radius: 50%; }
.dialog input[type=radio]:checked { background: radial-gradient(circle, #333 0 3px, #fff 4px); }
.dialog input[type=radio]:disabled { border-color: #c8c8c8; }
.dialog input[type=radio]:disabled:checked { background: radial-gradient(circle, #c8c8c8 0 3px, #fff 4px); }
.values { display: flex; align-items: center; margin-top: 7px; white-space: nowrap; }
.values input { width: 65px; height: 23px; padding: 0 3px; border: 1px solid #777; background: #fff; display: block; }
.values label { width: 60px; }
.values .stop { width: 64px; margin-left: auto; }
.values .step-field { position: relative; }
#step { border-color: #0078d7; }
.caret { position: absolute; left: 11px; top: 3px; width: 1px; height: 17px; background: #000; }
.actions { display: flex; justify-content: flex-end; gap: 8px; margin-top: 6px; padding-right: 1px; }
.actions button { width: 77px; height: 30px; border: 1px solid #adadad; background: #e1e1e1; }
.actions .ok { border: 2px solid #0078d7; }
.arrows { position: absolute; z-index: 4; left: 710px; top: 480px; filter: drop-shadow(2px 3px 2px rgba(0,0,0,.5)); }

/* floating desktop widgets */
.monitor { position: absolute; z-index: 4; right: 22px; bottom: 54px; display: flex; align-items: center; width: 149px; height: 70px; }
.ball { position: absolute; z-index: 1; left: 0; top: 0; }
.load { position: absolute; z-index: 2; left: 14px; top: 23px; font-size: 22px; line-height: 24px; font-weight: 300; white-space: nowrap; }
.load small { font-size: 13px; }
.pill { margin-left: auto; width: 100px; height: 41px; border-radius: 20px; background: #f5f6f6; box-shadow: 0 0 3px #999; display: flex; align-items: center; justify-content: flex-end; gap: 6px; padding-right: 4px; }
.rates { display: flex; flex-direction: column; gap: 3px; width: 48px; font-size: 10px; color: #666; white-space: nowrap; }
.rates span { display: flex; justify-content: space-between; align-items: center; }
.rates b { font-weight: 400; color: #000; }
.rates em { font-style: normal; color: #15c75b; }
.ime { position: absolute; z-index: 4; right: 19px; bottom: 10px; width: 61px; height: 27px; display: flex; align-items: center; justify-content: center; gap: 4px; background: #f8f8f8; border-radius: 3px; box-shadow: 0 1px 4px #666; font-size: 13px; }
.watermark { position: absolute; z-index: 5; right: 10px; bottom: 7px; display: flex; align-items: center; opacity: .8; width: 150px; }
.watermark div { display: flex; flex-direction: column; white-space: nowrap; }
.watermark strong { font-size: 21px; line-height: 24px; color: #4a88c8; }
.watermark span { font: 700 16px/20px "Liberation Sans", sans-serif; color: #58b05f; }
```
FILE: grid.js
```js
const letters = [...'ABCDEFGHIJKLMN', ''];
document.getElementById('cols').innerHTML =
  '<col style="width:50px"><col style="width:155px">' + '<col style="width:104px">'.repeat(13) + '<col>';
document.getElementById('head').innerHTML =
  '<th><i class="corner"></i></th>' + letters.map(c => `<th class="${c === 'D' ? 'on' : ''}">${c}</th>`).join('');
let rows = '';
for (let r = 13; r <= 42; r++) {
  const on = r >= 19 && r <= 35;
  rows += `<tr><th class="${on ? 'on' : ''}">${r}</th>` + letters.map(c => {
    const inside = on && c === 'D';
    return `<td class="${inside && r > 19 ? 'fill' : ''}">${inside && r === 19 ? '6' : ''}</td>`;
  }).join('') + '</tr>';
}
document.getElementById('body').innerHTML = rows;
```
